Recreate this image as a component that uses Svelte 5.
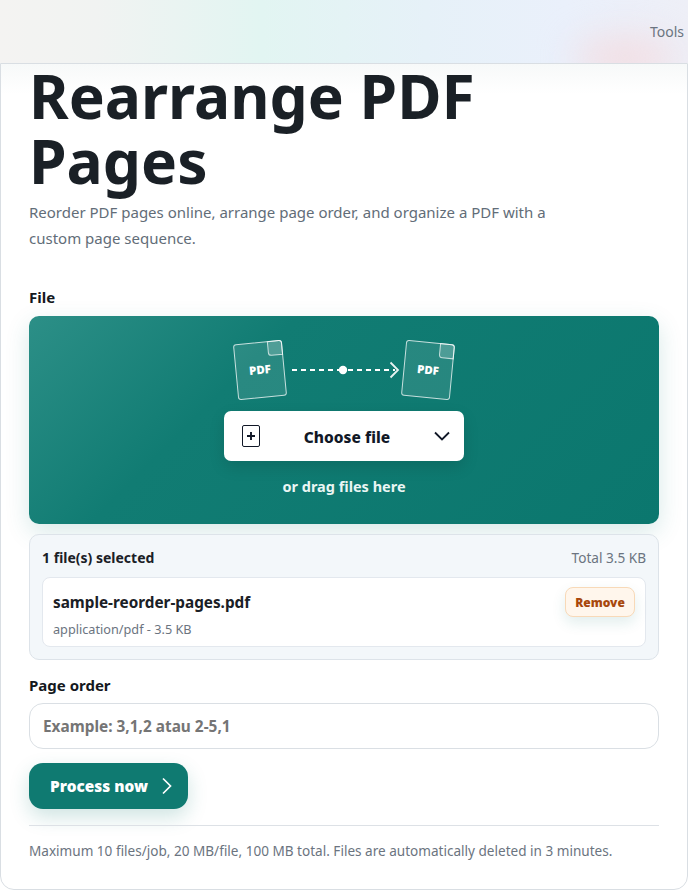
<script>
  let pageOrder = $state('');
</script>

<header class="topbar">
  <span class="blob"></span>
  <a class="nav-link" href="#tools">Tools</a>
</header>

<main class="card">
  <h1>Rearrange PDF Pages</h1>
  <p class="lead">Reorder PDF pages online, arrange page order, and organize a PDF with a custom page sequence.</p>

  <div class="label file-label">File</div>
  <section class="dropzone">
    <svg class="flow" width="230" height="64" viewBox="0 0 230 64" fill="none">
      <g transform="rotate(-5.500 31 33)">
        <rect x="7" y="5.500" width="48" height="55" rx="2.500" fill="#fff" fill-opacity=".1" stroke="#fff" stroke-opacity=".75"/>
        <path d="M41 5.500h11.500a2.500 2.500 0 0 1 2.500 2.500v11.500H44a3 3 0 0 1-3-3z" fill="#fff" fill-opacity=".18" stroke="#fff" stroke-opacity=".7"/>
        <text x="31" y="37" class="pdf">PDF</text>
      </g>
      <path d="M63 33h47M119 33h47" stroke="#fff" stroke-width="1.800" stroke-dasharray="5 4"/>
      <circle cx="114" cy="33" r="4.200" fill="#fff"/>
      <path d="M161.500 25.500l7.500 7.500-7.500 7.500" stroke="#fff" stroke-opacity=".9" stroke-width="1.800"/>
      <g transform="rotate(5.500 199 33)">
        <rect x="175" y="5.500" width="48" height="55" rx="2.500" fill="#fff" fill-opacity=".1" stroke="#fff" stroke-opacity=".75"/>
        <path d="M209 5.500h11.500a2.500 2.500 0 0 1 2.500 2.500v11.500H212a3 3 0 0 1-3-3z" fill="#fff" fill-opacity=".18" stroke="#fff" stroke-opacity=".7"/>
        <text x="199" y="37" class="pdf">PDF</text>
      </g>
    </svg>
    <button class="choose" type="button">
      <svg width="18" height="22" viewBox="0 0 18 22" fill="none" stroke="#111827">
        <rect x=".5" y=".5" width="17" height="21" rx="1.500"/>
        <path d="M5 11h8M9 7v8" stroke-width="1.900"/>
      </svg>
      <span>Choose file</span>
      <svg width="16" height="10" viewBox="0 0 16 10" fill="none" stroke="#111827" stroke-width="1.800">
        <path d="M1 1.500l7 7 7-7"/>
      </svg>
    </button>
    <div class="drag">or drag files here</div>
  </section>

  <section class="selected">
    <div class="selected-head">
      <strong>1 file(s) selected</strong>
      <span>Total 3.5 KB</span>
    </div>
    <div class="file-row">
      <div>
        <div class="file-name">sample-reorder-pages.pdf</div>
        <div class="file-meta">application/pdf - 3.5 KB</div>
      </div>
      <button class="remove" type="button">Remove</button>
    </div>
  </section>

  <label class="label order-label" for="order">Page order</label>
  <input id="order" class="order" placeholder="Example: 3,1,2 atau 2-5,1" bind:value={pageOrder} />

  <button class="process" type="button">
    Process now
    <svg width="12" height="18" viewBox="0 0 12 18" fill="none" stroke="#fff" stroke-width="1.700">
      <path d="M2 1.500l7.500 7.500-7.500 7.500"/>
    </svg>
  </button>

  <p class="limits">Maximum 10 files/job, 20 MB/file, 100 MB total. Files are automatically deleted in 3 minutes.</p>
</main>

<style>
  :global(body) {
    background: #fff;
    font-family: "Noto Sans", "Open Sans", sans-serif;
    color: #1a2026;
  }

  .topbar {
    position: relative;
    overflow: hidden;
    height: 63px;
    box-sizing: border-box;
    display: flex;
    justify-content: flex-end;
    align-items: flex-end;
    padding: 0 4px 21px;
    background: linear-gradient(90deg, #f4f3f2 0%, #f1f3f2 14%, #e2f5f2 38%, #e6f1f8 62%, #eaf0fb 82%, #eeeff7 100%);
  }

  .blob {
    position: absolute;
    left: 575px;
    top: 38px;
    width: 100px;
    height: 40px;
    border-radius: 50%;
    background: #f3dde2;
    filter: blur(18px);
  }

  .nav-link {
    position: relative;
    font-size: 14px;
    line-height: 20px;
    color: #6b7480;
    text-decoration: none;
  }

  .card {
    box-sizing: border-box;
    height: 827px;
    padding: 0 28px;
    background: linear-gradient(180deg, #f7f9f9 0, #fff 30px);
    border: 1px solid #d9dee3;
    border-radius: 0 0 14px 14px;
  }

  h1 {
    margin: -1px 0 0;
    width: 480px;
    font-size: 60.500px;
    line-height: 65px;
    font-weight: 700;
    color: #1a2026;
  }

  .lead {
    margin: 6px 0 0;
    width: 535px;
    font-size: 15px;
    line-height: 26px;
    color: #626d78;
  }

  .label {
    display: block;
    font-size: 15px;
    line-height: 20px;
    font-weight: 700;
    color: #14181d;
  }

  .file-label {
    margin-top: 36px;
    margin-bottom: 9px;
  }

  .dropzone {
    height: 208px;
    box-sizing: border-box;
    padding-top: 21px;
    display: flex;
    flex-direction: column;
    align-items: center;
    border-radius: 10px;
    background: linear-gradient(135deg, #2c8f87 0%, #117c73 32%, #0b776e 100%);
    box-shadow: 0 8px 24px rgba(15, 118, 110, .16);
  }

  .flow {
    display: block;
  }

  .pdf {
    fill: #fff;
    font-size: 11.500px;
    font-weight: 900;
    text-anchor: middle;
    font-family: "Noto Sans", sans-serif;
  }

  .choose {
    margin-top: 10px;
    width: 240px;
    height: 50px;
    padding: 0 14px 0 18px;
    display: flex;
    align-items: center;
    justify-content: space-between;
    border: 0;
    border-radius: 7px;
    background: #fff;
    font: 800 15.500px "Noto Sans", sans-serif;
    color: #111827;
    box-shadow: 0 6px 16px rgba(0, 0, 0, .12);
  }

  .choose span {
    margin-top: 2px;
  }

  .drag {
    margin-top: 15px;
    font-size: 14.500px;
    line-height: 20px;
    font-weight: 700;
    color: #eaf6f4;
  }

  .selected {
    margin-top: 10px;
    height: 126px;
    box-sizing: border-box;
    padding: 13px 12px 12px;
    background: #f3f7fa;
    border: 1px solid #dde3e9;
    border-radius: 10px;
  }

  .selected-head {
    display: flex;
    justify-content: space-between;
    align-items: center;
    font-size: 14px;
    line-height: 20px;
    margin-bottom: 9px;
  }

  .selected-head strong {
    color: #1a2026;
  }

  .selected-head span {
    font-size: 13.600px;
    color: #6b7480;
  }

  .file-row {
    height: 70px;
    box-sizing: border-box;
    padding: 9px 10px 0;
    display: flex;
    justify-content: space-between;
    align-items: flex-start;
    background: #fff;
    border: 1px solid #e3e8ee;
    border-radius: 8px;
  }

  .file-name {
    margin-top: 4px;
    font-size: 15.300px;
    line-height: 22px;
    font-weight: 700;
    color: #1a2026;
  }

  .file-meta {
    margin-top: 8px;
    font-size: 12.700px;
    line-height: 16px;
    color: #6b7480;
  }

  .remove {
    width: 70px;
    height: 30px;
    padding: 0;
    border: 1px solid #f8d9b8;
    border-radius: 8px;
    background: #fff6ec;
    font: 900 12px "Noto Sans", sans-serif;
    color: #a8480c;
    box-shadow: 0 6px 14px rgba(15, 118, 110, .12);
  }

  .order-label {
    margin-top: 15px;
    margin-bottom: 8px;
  }

  .order {
    display: block;
    width: 100%;
    height: 46px;
    box-sizing: border-box;
    padding: 0 13px;
    border: 1px solid #dadfe4;
    border-radius: 14px;
    background: #fff;
    font: 700 15.400px "Noto Sans", sans-serif;
    color: #1a2026;
    outline: none;
  }

  .order::placeholder {
    color: #757575;
    opacity: 1;
  }

  .process {
    margin-top: 14px;
    width: 159px;
    height: 46px;
    padding: 0 15px 0 21px;
    display: flex;
    align-items: center;
    justify-content: space-between;
    border: 0;
    border-radius: 14px;
    background: #0f7a71;
    font: 900 15.400px "Noto Sans", sans-serif;
    color: #fff;
    box-shadow: 0 8px 20px rgba(15, 118, 110, .2);
  }

  .limits {
    margin: 16px 0 0;
    padding-top: 15px;
    border-top: 1px solid #dde1e6;
    font-size: 13.570px;
    line-height: 20px;
    color: #6b7480;
  }
</style>
